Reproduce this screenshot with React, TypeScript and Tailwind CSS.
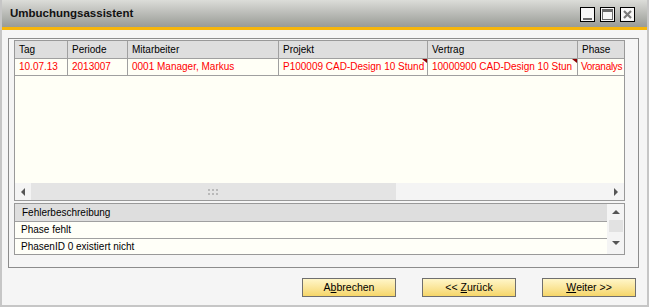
import React from "react";

const columns = [
  { title: "Tag", value: "10.07.13", w: "w-[53px]" },
  { title: "Periode", value: "2013007", w: "w-[60px]" },
  { title: "Mitarbeiter", value: "0001 Manager, Markus", w: "w-[151px]" },
  { title: "Projekt", value: "P100009 CAD-Design 10 Stund", w: "w-[149px]", link: true },
  { title: "Vertrag", value: "10000900 CAD-Design 10 Stun", w: "w-[150px]", link: true },
  { title: "Phase", value: "Voranalys", w: "w-[46px]", last: true },
];

function TitleButton({ kind }: { kind: "min" | "max" | "close" }) {
  return (
    <svg width="15" height="15" viewBox="0 0 15 15" className="block">
      <rect x="0.5" y="0.5" width="14" height="14" fill="#f7f7f7" stroke="#000" />
      {kind === "min" && <rect x="3" y="11" width="9" height="2" fill="#6b6b6b" />}
      {kind === "max" && (
        <>
          <rect x="2.5" y="2.5" width="10" height="10" fill="none" stroke="#6b6b6b" />
          <rect x="2" y="2" width="11" height="3" fill="#6b6b6b" />
        </>
      )}
      {kind === "close" && (
        <path d="M4 4 L11 11 M11 4 L4 11" stroke="#7a7a7a" strokeWidth="2.2" />
      )}
    </svg>
  );
}

function Arrow({ dir }: { dir: "left" | "right" | "up" | "down" }) {
  const pts = {
    left: "4,0 4,8 0,4",
    right: "0,0 0,8 4,4",
    up: "0,4 8,4 4,0",
    down: "0,0 8,0 4,4",
  }[dir];
  const horiz = dir === "left" || dir === "right";
  return (
    <svg width={horiz ? 4 : 8} height={horiz ? 8 : 4} className="block">
      <polygon points={pts} fill="#555" />
    </svg>
  );
}

function Grip() {
  const dots = [0, 4, 8].flatMap((x) => [0, 4].map((y) => [x, y]));
  return (
    <svg width="11" height="6" className="block">
      {dots.map(([x, y], i) => (
        <rect key={i} x={x} y={y} width="2" height="2" fill="#b9b9b9" />
      ))}
    </svg>
  );
}

function Button({ children }: { children: React.ReactNode }) {
  return (
    <button className="w-[94px] h-[19px] border border-[#6f6f6f] bg-gradient-to-b from-[#fff6c8] to-[#f6d668] text-[10.5px] text-black flex items-center justify-center leading-none">
      {children}
    </button>
  );
}

export default function App() {
  return (
    <div className="w-[649px] h-[307px] bg-[#f5f5f5] border-l-2 border-r-2 border-b-2 border-[#c6c6c6] flex flex-col font-['Liberation_Sans',Arial,sans-serif] text-black overflow-hidden">
      {/* title bar */}
      <div className="h-[27px] shrink-0 bg-gradient-to-b from-[#dcddd9] to-[#999b96] flex items-center justify-between pl-[8px] pr-[12px]">
        <span className="text-[11.5px] font-bold text-[#111]">Umbuchungsassistent</span>
        <div className="flex gap-[5px] pt-[2px]">
          <TitleButton kind="min" />
          <TitleButton kind="max" />
          <TitleButton kind="close" />
        </div>
      </div>
      <div className="h-[3px] shrink-0 bg-[#f6b60c]" />

      {/* body */}
      <div className="flex flex-col pl-[6px] pt-[8px]">
        <div className="w-[631px] h-[230px] border border-[#8c8c8c] pl-[5px] pt-[1px]">
          {/* main grid */}
          <div className="w-[611px] h-[161px] border border-[#999] bg-[#fffff6] flex flex-col">
            <div className="flex h-[18px] bg-[#dedede] border-b border-[#a0a0a0]">
              {columns.map((c) => (
                <div
                  key={c.title}
                  className={`${c.w} ${c.last ? "" : "border-r border-[#a0a0a0]"} pl-[4px] text-[10px] leading-[17px] whitespace-nowrap overflow-hidden`}
                >
                  {c.title}
                </div>
              ))}
            </div>
            <div className="flex h-[17px] border-b border-[#a0a0a0]">
              {columns.map((c) => (
                <div
                  key={c.title}
                  className={`${c.w} ${c.last ? "pl-[3px] tracking-[-0.3px]" : "pl-[4px] border-r border-[#a0a0a0]"} relative text-[10px] leading-[16px] text-[#ff0000] whitespace-nowrap overflow-hidden`}
                >
                  {c.value}
                  {c.link && (
                    <svg width="5" height="4" className="absolute right-0 top-0">
                      <polygon points="0,0 5,0 5,4" fill="#8b0000" />
                    </svg>
                  )}
                </div>
              ))}
            </div>
            <div className="flex-1" />
            {/* horizontal scrollbar */}
            <div className="h-[17px] flex bg-[#f4f4f4]">
              <div className="w-[16px] flex items-center justify-center">
                <Arrow dir="left" />
              </div>
              <div className="w-[365px] bg-[#e4e4e4] flex items-center justify-center">
                <Grip />
              </div>
              <div className="flex-1" />
              <div className="w-[17px] flex items-center justify-center">
                <Arrow dir="right" />
              </div>
            </div>
          </div>

          {/* error table */}
          <div className="mt-[2px] w-[611px] h-[52px] border border-[#999] bg-[#fffff8] flex">
            <div className="flex-1 flex flex-col text-[10px]">
              <div className="h-[18px] bg-[#dedede] border-b border-[#a0a0a0] pl-[7px] leading-[17px]">
                Fehlerbeschreibung
              </div>
              <div className="h-[17px] border-b border-[#a0a0a0] pl-[6px] leading-[16px]">
                Phase fehlt
              </div>
              <div className="h-[15px] pl-[6px] leading-[15px]">PhasenID 0 existiert nicht</div>
            </div>
            <div className="w-[17px] bg-[#f4f4f4] flex flex-col items-center">
              <div className="h-[16px] flex items-center">
                <Arrow dir="up" />
              </div>
              <div className="w-[14px] h-[12px] bg-[#e2e2e2]" />
              <div className="flex-1 flex items-center">
                <Arrow dir="down" />
              </div>
            </div>
          </div>
        </div>

        {/* buttons */}
        <div className="mt-[10px] flex justify-end gap-[26px] pr-[11px]">
          <Button>
            A<span className="underline">b</span>brechen
          </Button>
          <Button>
            &lt;&lt; <span className="underline ml-[3px]">Z</span>urück
          </Button>
          <Button>
            <span className="underline">W</span>eiter &gt;&gt;
          </Button>
        </div>
      </div>
    </div>
  );
}
